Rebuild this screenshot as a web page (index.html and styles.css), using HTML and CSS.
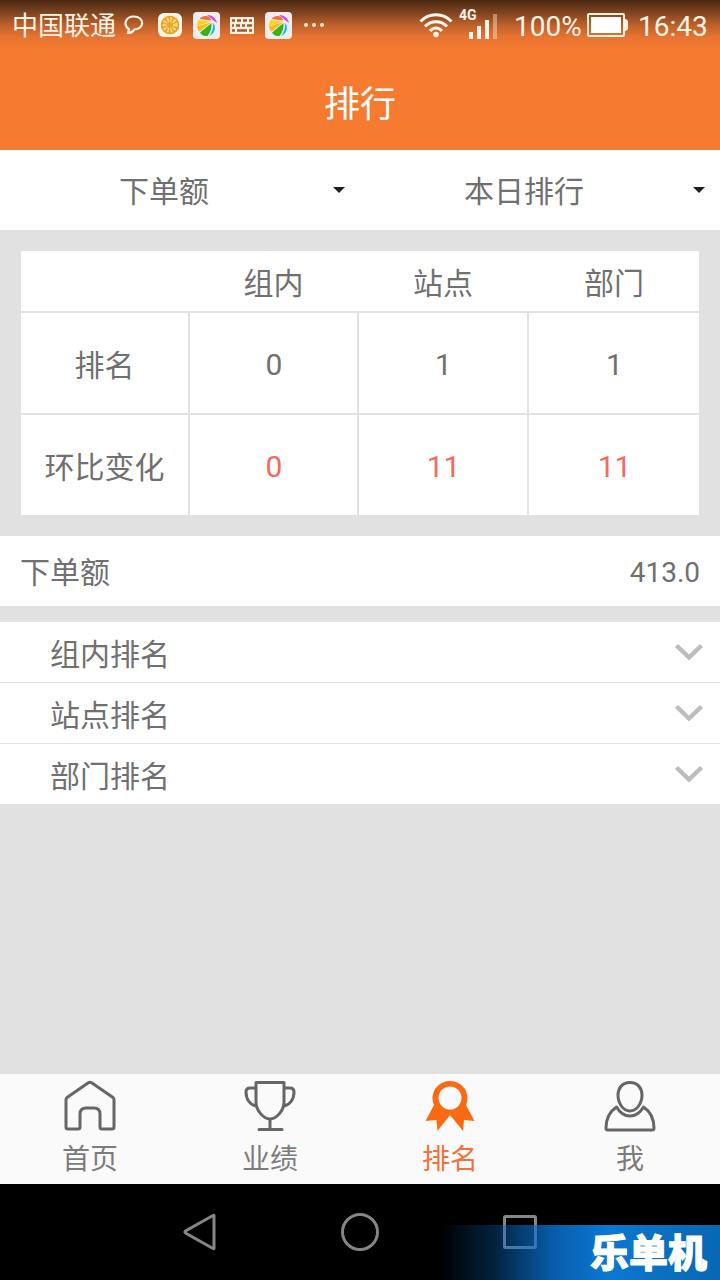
FILE: index.html
```html
<!DOCTYPE html>
<html lang="zh-CN">
<head>
    <meta charset="UTF-8">
    <meta name="viewport" content="width=device-width, initial-scale=1.0">
    <title>排行</title>
    <link rel="stylesheet" href="styles.css">
</head>
<body>
    <svg width="0" height="0" class="defs">
        <symbol id="ball" viewBox="0 0 27 27">
            <rect width="27" height="27" rx="4" fill="#eeeeee"/>
            <path d="M4 13C4 11 5 9 6 8L18 9.500L4.500 14Z" fill="#ffd21c"/>
            <path d="M6.500 7C9 4 13 3 16 5L18.500 8.500Z" fill="#f66a3a"/>
            <path d="M4 14.500L18 10.500L6.500 19.500C5 18 4 16.500 4 14.500Z" fill="#ffb81c"/>
            <path d="M18.500 11L7 20.500C9 23.500 12 24.500 14.500 24C17.500 20 19 15.500 18.500 11Z" fill="#35b418"/>
            <path d="M20 11C20.500 16 19 20 16.500 23.500C21 22 23 18 21.500 13Z" fill="#28b8f0"/>
            <path d="M14 3C19 3 23 6 24 11L20 8Z" fill="#d448e4"/>
        </symbol>
        <symbol id="arrow" viewBox="0 0 30 20">
            <path d="M2.500 3.500L15 15.500L27.500 3.500" fill="none" stroke="#bdbdbd" stroke-width="4.500"/>
        </symbol>
    </svg>

    <div class="status">
        <span class="carrier">中国联通</span>
        <svg class="chat" width="20" height="20" viewBox="0 0 20 20"><path d="M4 18L5 14.500C-1 10 1 1.500 10 1.500C20.500 1.500 21 14 10.500 14.500C9 16.500 7 18 4 18Z" fill="none" stroke="#fff3e0" stroke-width="2.200"/></svg>
        <svg class="orange" width="24" height="24" viewBox="0 0 24 24">
            <rect width="24" height="24" rx="6" fill="#fff6e4"/>
            <circle cx="12" cy="12" r="9" fill="#eba82c"/>
            <circle cx="12" cy="12" r="6" fill="none" stroke="#ffdf90" stroke-width="6" stroke-dasharray="1.500 2"/>
            <circle cx="12" cy="12" r="8.500" fill="none" stroke="#e8a01c" stroke-width="1.500"/>
        </svg>
        <svg class="app" width="27" height="27"><use href="#ball"/></svg>
        <svg class="keyboard" width="24" height="17" viewBox="0 0 24 17">
            <rect width="24" height="17" rx="1" fill="#fff0df"/>
            <path d="M2 3.500H5M7 3.500H11M13 3.500H17M19 3.500H22M2 8.500H4M6 8.500H10M12 8.500H15M17 8.500H22M2 13.500H5M7 13.500H17M19 13.500H22" stroke="#a05a30" stroke-width="2.500"/>
        </svg>
        <svg class="app" width="27" height="27"><use href="#ball"/></svg>
        <svg class="dots" width="20" height="4" viewBox="0 0 20 4"><g fill="#fde3cf"><circle cx="2" cy="2" r="2"/><circle cx="10" cy="2" r="2"/><circle cx="18" cy="2" r="2"/></g></svg>
        <svg class="wifi" width="34" height="26" viewBox="0 0 34 26">
            <g fill="none" stroke="#fff6ec" stroke-width="3">
                <path d="M1.500 9.500C10 .5 24 .5 32.500 9.500"/>
                <path d="M6 14.500C12 8 22 8 28 14.500"/>
                <path d="M11 19C14.500 15 19.500 15 23 19"/>
            </g>
            <circle cx="17" cy="22.500" r="2.800" fill="#fff6ec"/>
        </svg>
        <div class="signal">
            <span>4G</span>
            <i class="bar b1"></i><i class="bar b2"></i><i class="bar b3"></i><i class="bar b4"></i>
        </div>
        <span class="percent">100%</span>
        <svg class="battery" width="41" height="25" viewBox="0 0 41 25">
            <rect x="1" y="1" width="36" height="22" rx="1" fill="none" stroke="#fff3df" stroke-width="2"/>
            <rect x="4" y="4" width="30" height="16" fill="#fff"/>
            <path d="M38 6H39L41 8V16L39 18H38Z" fill="#fff3df"/>
        </svg>
        <span class="time">16:43</span>
    </div>

    <header class="header">排行</header>

    <div class="filters">
        <div class="filter"><span>下单额</span><i class="caret"></i></div>
        <div class="filter"><span>本日排行</span><i class="caret"></i></div>
    </div>

    <div class="rank">
        <div class="rank-head">
            <span></span><span>组内</span><span>站点</span><span>部门</span>
        </div>
        <div class="rank-row">
            <span>排名</span><span class="num">0</span><span class="num">1</span><span class="num">1</span>
        </div>
        <div class="rank-row">
            <span>环比变化</span><span class="num change">0</span><span class="num change">11</span><span class="num change">11</span>
        </div>
    </div>

    <div class="total">
        <span>下单额</span>
        <span class="amount">413.0</span>
    </div>

    <div class="list">
        <div class="item"><span>组内排名</span><svg width="30" height="20"><use href="#arrow"/></svg></div>
        <div class="item"><span>站点排名</span><svg width="30" height="20"><use href="#arrow"/></svg></div>
        <div class="item"><span>部门排名</span><svg width="30" height="20"><use href="#arrow"/></svg></div>
    </div>

    <nav class="tabs">
        <div class="tab">
            <svg width="52" height="52" viewBox="0 0 52 52"><path d="M24 3Q26 1.500 28 3L49 17.500Q50 18.500 50 19.500V47Q50 49 48 49H38Q36 49 36 47V34Q36 28 30 28H22Q16 28 16 34V47Q16 49 14 49H4Q2 49 2 47V19.500Q2 18.500 3 17.500Z"/></svg>
            <span>首页</span>
        </div>
        <div class="tab">
            <svg width="52" height="52" viewBox="0 0 52 52"><path d="M12 2.500H40V22C40 31 32 39 26 39C20 39 12 31 12 22ZM12 8H6Q2 8 2 12C2 19 6 25 12 26M40 8H46Q50 8 50 12C50 19 46 25 40 26M26 39V49M15 49.500H38"/></svg>
            <span>业绩</span>
        </div>
        <div class="tab active">
            <svg width="52" height="52" viewBox="0 0 52 52"><path class="fill" fill-rule="evenodd" d="M26 1A17 17 0 0 1 42 25L50.500 41L40 40L39 51L26 35L13.500 51L12.500 40L1.500 41L10 25A17 17 0 0 1 26 1ZM26 6.500A11.500 11.500 0 1 0 26 29.500A11.500 11.500 0 1 0 26 6.500Z"/></svg>
            <span>排名</span>
        </div>
        <div class="tab">
            <svg width="52" height="52" viewBox="0 0 52 52"><path d="M26 2.500C18.500 2.500 14 8 14 15C14 23 19 31 26 31C33 31 38 23 38 15C38 8 33.500 2.500 26 2.500ZM12.500 27C5 32 2 40 2 48Q2 50 4 50H48Q50 50 50 48C50 40 47 32 39.500 27C36 33 32 36 26 36C20 36 16 33 12.500 27Z"/></svg>
            <span>我</span>
        </div>
    </nav>

    <div class="system">
        <svg width="40" height="40" viewBox="0 0 40 40"><path d="M34 3.500V36.500Q34 37 33 36.500L5.500 21Q4.500 20 5.500 19L33 3.500Q34 3 34 3.500Z"/></svg>
        <svg width="40" height="40" viewBox="0 0 40 40"><circle cx="20" cy="20" r="17.500"/></svg>
        <svg width="40" height="40" viewBox="0 0 40 40"><rect x="4.500" y="4.500" width="31" height="31" rx="1"/></svg>
        <div class="watermark">乐单机</div>
    </div>
</body>
</html>
```
FILE: styles.css
```css
* {
    box-sizing: border-box;
}

body {
    margin: 0;
    width: 720px;
    height: 1280px;
    display: flex;
    flex-direction: column;
    overflow: hidden;
    background-color: #e1e1e1;
    color: #707070;
    font-family: Roboto, "Noto Sans CJK SC", sans-serif;
    font-size: 30px;
    line-height: 40px;
}

svg {
    display: block;
    flex-shrink: 0;
}

.defs {
    position: absolute;
}

.status {
    display: flex;
    align-items: center;
    height: 50px;
    padding-left: 12px;
    background: linear-gradient(#4a2812, #7e4320 25%, #bd602a 50%, #e87432 75%, #f67b30);
    color: #fff3e6;
    font-size: 28px;
    white-space: nowrap;
}

.carrier {
    width: 104px;
    padding-top: 2px;
    font-size: 26px;
}

.chat {
    margin: 0 0 0 8px;
}

.orange {
    margin: 0 11px 0 14px;
}

.keyboard {
    margin: 0 11px 0 10px;
}

.dots {
    margin-left: 12px;
}

.wifi {
    margin-left: 95px;
}

.signal {
    display: flex;
    align-items: flex-end;
    gap: 4px;
    width: 40px;
    height: 30px;
    margin: 0 15px 2px 6px;
    padding-left: 10px;
    position: relative;
}

.signal span {
    position: absolute;
    left: 0;
    top: -1px;
    font-size: 14px;
    font-weight: bold;
    line-height: 14px;
}

.bar {
    width: 4px;
    background-color: #fff6ec;
}

.b1 {
    height: 7px;
}

.b2 {
    height: 13px;
}

.b3 {
    height: 19px;
}

.b4 {
    height: 25px;
    opacity: 0.4;
}

.percent {
    width: 73px;
    padding-top: 3px;
}

.time {
    margin-left: 10px;
    padding-top: 3px;
}

.header {
    height: 100px;
    padding-top: 3px;
    background-color: #f67b30;
    color: #fff;
    font-size: 36px;
    line-height: 104px;
    text-align: center;
}

.filters {
    display: flex;
    height: 80px;
    background-color: #fff;
}

.filter {
    flex: 1;
    display: flex;
    align-items: center;
    padding-right: 15px;
}

.filter span {
    flex: 1;
    padding: 4px 5px 0 0;
    text-align: center;
}

.caret {
    border: 6px solid transparent;
    border-top-color: #1c1c2e;
    border-bottom: 0;
}

.rank {
    display: grid;
    grid-template-rows: 60px 100px 100px;
    gap: 2px;
    margin: 21px;
}

.rank-head,
.rank-row {
    display: grid;
    grid-template-columns: 167px 167px 168px 170px;
    gap: 2px;
}

.rank-head {
    background-color: #fff;
}

.rank span {
    display: flex;
    align-items: center;
    justify-content: center;
    padding-top: 5px;
    background-color: #fff;
}

.rank .num {
    padding: 3px 0 0 1px;
}

.change {
    color: #f8685c;
}

.total {
    display: flex;
    align-items: center;
    justify-content: space-between;
    height: 70px;
    padding: 4px 20px 0;
    background-color: #fff;
}

.amount {
    font-size: 28px;
}

.list {
    display: grid;
    gap: 1px;
    margin-top: 16px;
}

.item {
    display: flex;
    align-items: center;
    justify-content: space-between;
    height: 60px;
    padding: 0 16px 0 50px;
    background-color: #fff;
}

.item span {
    padding-top: 5px;
}

.tabs {
    display: flex;
    height: 110px;
    margin-top: auto;
    background-color: #fafafa;
}

.tab {
    flex: 1;
    display: flex;
    flex-direction: column;
    align-items: center;
    padding-top: 6px;
    color: #7c7c7c;
    font-size: 28px;
}

.tab path {
    fill: none;
    stroke: #666;
    stroke-width: 3;
    stroke-linecap: round;
    stroke-linejoin: round;
}

.tab .fill {
    fill: #fb6a12;
    stroke: none;
}

.tab span {
    margin-top: 8px;
}

.active {
    color: #f8703c;
}

.system {
    display: flex;
    justify-content: center;
    gap: 120px;
    height: 96px;
    padding-top: 28px;
    background-color: #000;
    position: relative;
}

.system svg {
    fill: none;
    stroke: #858585;
    stroke-width: 3;
}

/* translucent brand strip over the navigation bar */
.watermark {
    position: absolute;
    right: 0;
    bottom: 0;
    width: 280px;
    height: 55px;
    padding: 2px 13px 0 0;
    background: linear-gradient(90deg, rgba(10, 110, 200, 0), rgba(10, 100, 185, 0.35) 20%, rgba(10, 115, 210, 0.8) 40%, #0b78d4 60%, #0a6fc0 80%, #0868b4);
    color: #fff;
    font-size: 39px;
    font-weight: 900;
    line-height: 55px;
    text-align: right;
    -webkit-text-stroke: 1px #fff;
}
```
